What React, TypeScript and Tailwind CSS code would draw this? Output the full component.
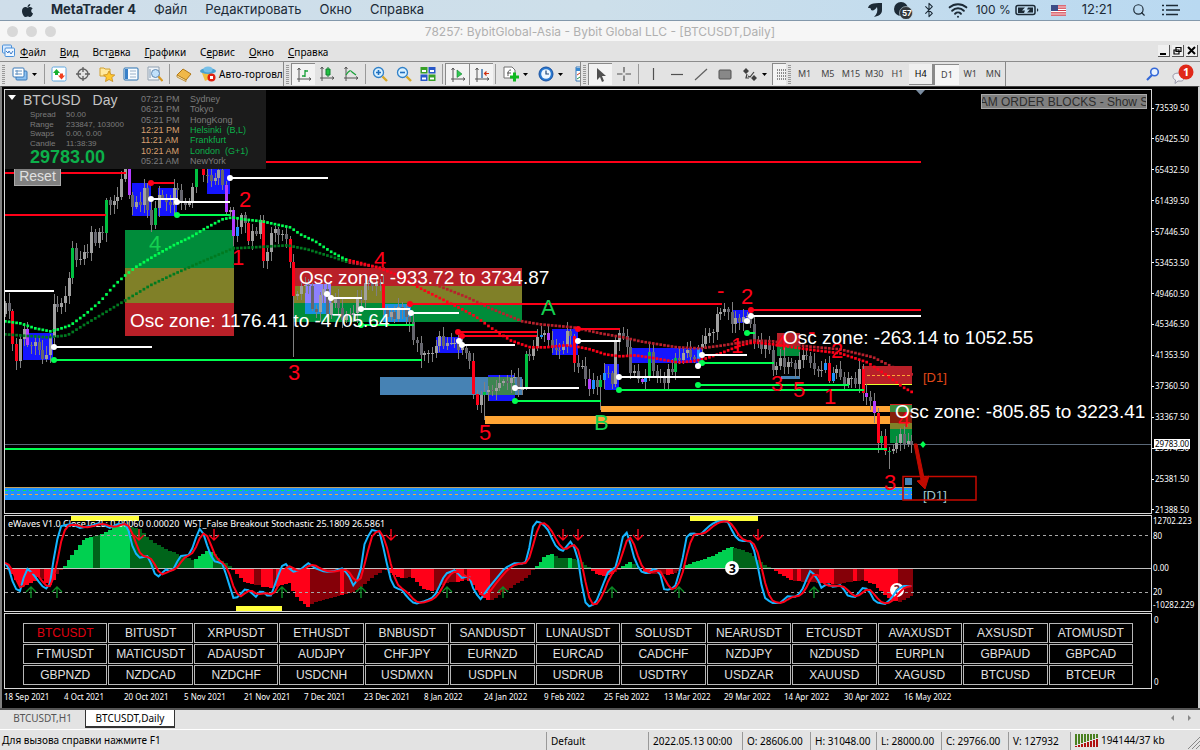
import type { ReactNode } from "react";
import { FaApple } from "react-icons/fa";
import { Bluetooth, Search, Wifi } from "lucide-react";
import clsx from "clsx";

const BAR = 3.745;
const FIRST = 5;

// daily closes in thousands, 18 Sep 2021 - 18 May 2022
const CLOSES = [
  48.3, 47.2, 42.9, 40.7, 43.6, 44.9, 42.8, 42.7, 43.2, 42.2, 41.0, 41.5, 43.8,
  48.1, 47.7, 48.2, 49.2, 51.5, 55.4, 53.8, 53.9, 54.9, 54.7, 57.5, 56.0, 57.4, 57.3, 61.6, 60.9, 61.5, 62.0, 64.3, 66.0, 62.2, 60.7, 61.3, 60.9, 63.1, 60.3, 58.4, 60.6, 62.2, 61.9, 61.3,
  61.0, 63.2, 62.9, 61.4, 61.0, 61.5, 63.3, 67.5, 66.9, 64.9, 64.8, 64.1, 64.4, 65.5, 63.6, 60.1, 60.3, 56.9, 58.1, 59.7, 58.6, 56.3, 57.6, 57.2, 59.0, 53.7, 54.8, 57.3, 57.8, 57.0,
  57.2, 56.5, 53.6, 49.2, 49.4, 50.5, 50.6, 50.5, 47.5, 47.1, 49.3, 50.1, 46.7, 48.3, 48.8, 47.6, 46.1, 46.8, 46.7, 46.9, 48.9, 48.6, 50.8, 50.8, 50.4, 50.8, 50.7, 47.5, 46.4, 47.1, 46.2,
  47.7, 47.3, 46.4, 45.8, 43.4, 43.1, 41.5, 41.7, 41.8, 41.8, 42.7, 43.9, 42.6, 43.1, 43.1, 43.1, 42.2, 42.4, 41.7, 40.7, 36.4, 35.0, 36.3, 36.7, 36.9, 36.8, 37.2, 37.8, 38.1, 37.9, 38.5,
  38.7, 36.9, 37.3, 41.6, 41.4, 42.4, 43.8, 44.1, 44.4, 43.5, 42.4, 42.2, 42.1, 42.6, 44.6, 43.9, 40.5, 40.0, 40.1, 38.4, 37.1, 38.3, 37.3, 38.3, 39.2, 39.1, 37.7, 43.2,
  44.4, 43.9, 42.5, 39.1, 39.4, 38.4, 38.0, 38.7, 41.9, 39.4, 38.7, 38.8, 37.8, 39.7, 39.3, 41.1, 40.9, 41.8, 42.2, 41.3, 41.0, 42.4, 42.9, 44.0, 44.3, 44.5, 46.8, 47.1, 47.4, 47.1, 45.5,
  46.3, 45.8, 46.4, 46.6, 45.5, 43.2, 43.5, 42.3, 42.8, 42.2, 39.5, 40.1, 41.1, 39.9, 40.6, 40.4, 39.7, 40.8, 41.5, 41.4, 40.5, 39.7, 39.4, 39.5, 40.4, 38.1, 39.2, 39.7, 38.6, 37.6,
  38.5, 38.5, 37.7, 39.7, 36.6, 36.0, 35.5, 34.0, 30.1, 31.0, 29.0, 29.0, 29.3, 30.1, 31.3, 29.9, 30.4, 29.8,
];

const RED = "#ff0018";
const GREEN = "#00c040";
const LABEL_GREEN = "#14d050";
const PURPLE = "#b43cff";
const BLUE = "#1e90ff";

const VOLUME_COLORS: Record<number, string> = {
  2: RED, 3: RED, 6: PURPLE, 18: GREEN, 27: GREEN, 33: PURPLE, 40: GREEN, 51: GREEN, 53: RED, 59: PURPLE, 61: PURPLE,
  62: BLUE, 65: RED, 69: RED, 76: RED, 77: RED, 101: RED, 125: RED, 126: RED, 128: GREEN, 139: GREEN, 143: BLUE,
  145: PURPLE, 152: RED, 156: PURPLE, 157: BLUE, 159: GREEN, 160: BLUE, 170: PURPLE, 171: BLUE, 172: GREEN,
  179: GREEN, 185: BLUE, 219: BLUE, 220: RED, 221: BLUE, 229: RED, 230: PURPLE, 232: PURPLE, 233: RED, 234: GREEN,
  235: RED, 236: GREEN,
};

const LONG_LOWS: Record<number, number> = { 3: 39.6, 4: 39.8, 40: 57.9, 77: 41.2, 111: 39.8, 128: 33.0, 159: 34.3, 236: 26.7 };

type Point = [number, number];

const FAST_MA: Point[] = [
  [5, 321], [20, 323], [35, 328], [50, 331], [58, 329], [70, 325], [85, 314], [100, 301], [115, 284], [125, 275], [135, 267], [155, 255],
  [175, 244], [190, 237], [205, 228], [222, 219], [232, 217], [243, 219], [262, 221], [280, 225], [290, 227], [300, 234], [315, 241],
  [330, 251], [345, 259], [362, 263], [380, 268], [400, 276], [418, 287], [440, 298], [460, 308], [475, 316], [490, 327], [510, 340], [530, 347],
  [545, 347], [565, 345], [575, 346], [590, 349], [605, 354], [620, 356], [635, 355], [655, 358], [677, 362], [692, 361], [706, 358],
  [723, 352], [740, 345], [753, 342], [773, 344], [807, 349], [840, 353], [867, 362], [885, 374], [903, 387], [914, 393],
];

const SLOW_MA: Point[] = [
  [5, 334], [47, 337], [67, 335], [83, 325], [100, 315], [125, 300], [150, 285], [173, 274], [200, 262], [233, 248], [253, 247], [287, 245],
  [307, 249], [333, 257], [348, 262], [373, 266], [383, 268], [407, 276], [437, 285], [467, 297], [490, 308], [522, 321], [540, 324], [573, 327],
  [600, 333], [623, 337], [640, 341], [677, 347], [700, 348], [723, 345], [753, 340], [773, 341], [807, 346], [840, 349], [873, 357],
  [893, 367], [914, 375],
];

// edge of the eWaves histogram, zero line at 568
const WAVES: Point[] = [
  [5, 568], [8, 569], [12, 573], [15, 578], [20, 585], [28, 585], [35, 581], [40, 576], [45, 583], [50, 585], [54, 580], [57, 575], [60, 571],
  [63, 568], [67, 563], [70, 558], [75, 551], [80, 545], [85, 538], [92, 537], [100, 535], [108, 531], [115, 526], [120, 524], [128, 526],
  [140, 529], [147, 537], [155, 543], [165, 549], [175, 553], [187, 558], [194, 560], [200, 556], [207, 551], [213, 552], [220, 560],
  [227, 564], [232, 568], [240, 577], [246, 583], [258, 585], [265, 587], [272, 588], [280, 586], [290, 583], [293, 590], [298, 598],
  [304, 604], [309, 607], [315, 602], [325, 600], [340, 596], [355, 592], [365, 584], [375, 576], [382, 571], [386, 569], [390, 573],
  [400, 578], [412, 577], [418, 583], [425, 590], [434, 591], [440, 586], [450, 582], [460, 582], [467, 579], [473, 585], [480, 594],
  [487, 600], [493, 600], [500, 594], [510, 588], [520, 582], [530, 574], [535, 568], [538, 565], [545, 556], [552, 554], [560, 558],
  [572, 558], [580, 561], [587, 566], [590, 568], [595, 573], [605, 576], [612, 574], [619, 570], [621, 567], [630, 562], [635, 565], [640, 568],
  [650, 575], [660, 573], [668, 575], [674, 574], [680, 570], [685, 566], [695, 562], [705, 559], [715, 555], [725, 549], [732, 547],
  [740, 549], [750, 553], [757, 559], [765, 565], [772, 568], [785, 577], [795, 581], [810, 582], [825, 583], [838, 584], [850, 582],
  [865, 580], [875, 585], [885, 595], [893, 601], [900, 602], [907, 598], [914, 594],
];

const FADING: Point[] = [
  [40, 43], [54, 63], [93, 100], [130, 194], [213, 232], [254, 261], [273, 276], [310, 340], [344, 386], [404, 412], [434, 456], [464, 468],
  [490, 536], [554, 569], [573, 590], [612, 620], [633, 640], [650, 667], [674, 681], [734, 773], [794, 798], [802, 820], [835, 854],
  [858, 865], [899, 915],
];

const STOCHASTIC: Point[] = [
  [5, 563], [10, 570], [14, 588], [20, 591], [25, 573], [28, 568], [33, 574], [42, 586], [47, 589], [51, 582], [55, 548], [61, 526], [72, 524],
  [80, 528], [90, 526], [100, 523], [110, 528], [118, 524], [127, 524], [132, 545], [138, 558], [148, 556], [152, 566], [156, 577], [160, 576],
  [165, 569], [172, 572], [180, 556], [190, 555], [195, 540], [201, 526], [207, 545], [213, 561], [222, 563], [228, 580], [233, 598],
  [238, 597], [246, 588], [256, 597], [261, 590], [270, 598], [276, 582], [281, 567], [285, 563], [292, 572], [300, 570], [308, 563],
  [315, 568], [325, 572], [335, 571], [343, 568], [350, 578], [354, 587], [360, 574], [365, 541], [372, 530], [380, 532], [385, 555],
  [390, 578], [395, 588], [402, 590], [408, 598], [415, 604], [425, 601], [434, 597], [440, 585], [445, 574], [455, 570], [462, 578],
  [469, 576], [473, 588], [480, 600], [487, 590], [495, 580], [505, 568], [515, 563], [525, 564], [530, 545], [534, 521], [542, 523],
  [548, 530], [555, 545], [562, 552], [571, 541], [577, 553], [581, 580], [586, 605], [591, 607], [597, 600], [604, 582], [609, 570],
  [615, 569], [620, 550], [624, 532], [628, 533], [633, 555], [640, 571], [648, 574], [654, 568], [660, 573], [663, 589], [670, 590],
  [676, 585], [682, 562], [687, 535], [692, 533], [700, 535], [708, 527], [715, 522], [722, 521], [728, 522], [734, 535], [740, 541],
  [750, 541], [756, 555], [760, 580], [765, 598], [772, 603], [780, 603], [788, 596], [797, 597], [803, 588], [810, 571], [816, 576],
  [822, 589], [827, 583], [833, 587], [841, 585], [848, 596], [856, 597], [862, 588], [868, 589], [875, 602], [885, 604], [890, 600],
  [897, 590], [903, 586], [912, 586],
];

// [x1, x2, y, color, dot at the start]
const LEVELS: [number, number, number, string, boolean][] = [
  [266, 921, 162, RED, false],
  [5, 126, 173, RED, false],
  [5, 106, 215, RED, false],
  [151, 174, 183, RED, true],
  [230, 328, 178, "#fff", true],
  [151, 178, 199, "#fff", true],
  [177, 230, 202, "#fff", true],
  [177, 230, 215, "#00ff50", true],
  [5, 54, 291, "#fff", false],
  [54, 152, 347, "#fff", true],
  [54, 422, 360, "#00ff50", true],
  [331, 362, 298, "#fff", true],
  [361, 410, 309, "#fff", true],
  [411, 459, 313, "#fff", true],
  [361, 414, 325, "#00ff50", true],
  [410, 722, 304, RED, true],
  [458, 537, 332, RED, true],
  [462, 537, 336, RED, true],
  [462, 515, 345, "#fff", true],
  [578, 620, 329, RED, true],
  [578, 620, 341, "#fff", true],
  [515, 579, 388, "#fff", true],
  [515, 601, 401, "#00ff50", true],
  [619, 700, 377, "#fff", true],
  [619, 864, 390, "#00ff50", true],
  [698, 849, 385, "#00ff50", true],
  [702, 747, 355, "#fff", true],
  [702, 774, 363, "#00ff50", true],
  [751, 921, 316, "#fff", true],
  [751, 921, 310, RED, true],
  [747, 755, 333, "#00ff50", true],
  [5, 887, 449, "#00ff50", false],
];

// [x, y, width, height, color]
const BLOCKS: [number, number, number, number, string][] = [
  [125, 230, 109, 38, "#008c3a"],
  [125, 268, 109, 35, "#808028"],
  [125, 303, 109, 33, "#b92028"],
  [294, 268, 228, 18, "#b92028"],
  [294, 286, 228, 17, "#808028"],
  [294, 303, 228, 19, "#008c3a"],
  [777, 333, 23, 13, "#b92028"],
  [777, 346, 23, 10, "#008c3a"],
  [23, 333, 30, 27, "#1515ff"],
  [132, 183, 19, 33, "#1515ff"],
  [158, 188, 19, 28, "#1515ff"],
  [207, 160, 23, 34, "#1515ff"],
  [305, 284, 26, 19, "#8d80ff"],
  [305, 303, 26, 11, "#1890e0"],
  [383, 304, 28, 18, "#1890e0"],
  [436, 337, 26, 16, "#1515ff"],
  [552, 329, 26, 26, "#1515ff"],
  [605, 364, 14, 26, "#1515ff"],
  [632, 348, 70, 15, "#1515ff"],
  [732, 310, 19, 13, "#1515ff"],
  [380, 377, 142, 18, "#4682b4"],
  [488, 375, 27, 26, "#1515ff"],
  [488, 377, 27, 18, "#3d8450"],
  [781, 376, 19, 3, "#4682b4"],
  [601, 406, 289, 6, "#ffa535"],
  [485, 416, 405, 8, "#ffa535"],
  [890, 404, 22, 8, "#3d8a3a"],
  [890, 412, 22, 11, "#85200a"],
  [890, 423, 22, 6, "#808028"],
  [890, 429, 22, 14, "#008c3a"],
  [862, 366, 50, 18, "#b92028"],
  [5, 487, 907, 1, "#c0a060"],
  [5, 488, 907, 12, "#1e90ff"],
  [905, 478, 7, 7, "#4682b4"],
];

const WAVE_LABELS: [number, number, string, string][] = [
  [239, 207, "2", RED], [232, 265, "1", RED], [149, 251, "4", LABEL_GREEN], [288, 380, "3", RED], [374, 267, "4", RED], [479, 440, "5", RED],
  [541, 315, "A", LABEL_GREEN], [594, 430, "B", LABEL_GREEN], [717, 298, "-", RED], [741, 304, "2", RED], [731, 353, "1", RED], [775, 350, "4", RED],
  [808, 339, "-", RED], [831, 358, "2", RED], [771, 391, "3", RED], [793, 397, "5", RED], [824, 404, "1", RED], [898, 427, "4", RED], [884, 490, "3", RED],
];

const PRICES = ["73539.50", "69425.50", "65432.50", "61439.50", "57446.50", "53453.50", "49460.50", "45346.50", "41353.50", "37360.50", "33367.50", "29374.50", "25381.50", "21388.50"];

const DATES = [
  "18 Sep 2021", "4 Oct 2021", "20 Oct 2021", "5 Nov 2021", "21 Nov 2021", "7 Dec 2021", "23 Dec 2021", "8 Jan 2022",
  "24 Jan 2022", "9 Feb 2022", "25 Feb 2022", "13 Mar 2022", "29 Mar 2022", "14 Apr 2022", "30 Apr 2022", "16 May 2022",
];

const SYMBOLS = [
  "BTCUSDT", "BITUSDT", "XRPUSDT", "ETHUSDT", "BNBUSDT", "SANDUSDT", "LUNAUSDT", "SOLUSDT", "NEARUSDT", "ETCUSDT", "AVAXUSDT", "AXSUSDT", "ATOMUSDT",
  "FTMUSDT", "MATICUSDT", "ADAUSDT", "AUDJPY", "CHFJPY", "EURNZD", "EURCAD", "CADCHF", "NZDJPY", "NZDUSD", "EURPLN", "GBPAUD", "GBPCAD",
  "GBPNZD", "NZDCAD", "NZDCHF", "USDCNH", "USDMXN", "USDPLN", "USDRUB", "USDTRY", "USDZAR", "XAUUSD", "XAGUSD", "BTCUSD", "BTCEUR",
];

const CITIES: [string, string, boolean][] = [
  ["07:21 PM", "Sydney", false],
  ["06:21 PM", "Tokyo", false],
  ["05:21 PM", "HongKong", false],
  ["12:21 PM", "Helsinki  (B,L)", true],
  ["11:21 AM", "Frankfurt", true],
  ["10:21 AM", "London  (G+1)", true],
  ["05:21 AM", "NewYork", false],
];

const priceY = (p: number) => 108 + (73.54 - p) / 0.12973;

function valueAt(points: Point[], x: number) {
  const i = points.findIndex((p) => p[0] >= x);
  if (i < 0) return points[points.length - 1][1];
  if (i === 0) return points[0][1];
  const [x0, y0] = points[i - 1];
  const [x1, y1] = points[i];
  return y0 + ((y1 - y0) * (x - x0)) / (x1 - x0);
}

function noise(i: number) {
  const s = Math.sin(i * 12.9898) * 43758.5453;
  return s - Math.floor(s);
}

function Candles() {
  return (
    <g shapeRendering="crispEdges">
      {CLOSES.map((close, i) => {
        const open = i ? CLOSES[i - 1] : 46.8;
        const x = Math.round(FIRST + i * BAR);
        const top = priceY(Math.max(open, close));
        const bottom = priceY(Math.min(open, close));
        const high = top - 2 - noise(i) * 8;
        const low = LONG_LOWS[i] ? priceY(LONG_LOWS[i]) : bottom + 2 + noise(i + 400) * 8;
        const fill = VOLUME_COLORS[i] ?? (close >= open ? "#a0a0a0" : "#66666e");
        return (
          <g key={i}>
            <rect x={x} y={high} width={1} height={low - high} fill="#808080" />
            <rect x={x - 1} y={top} width={3} height={Math.max(1, bottom - top)} fill={fill} />
          </g>
        );
      })}
    </g>
  );
}

function Dots({ points, rising, falling }: { points: Point[]; rising: string; falling: string }) {
  return (
    <g>
      {CLOSES.map((_, i) => {
        const x = FIRST + i * BAR;
        return <rect key={i} x={x - 1} y={valueAt(points, x) - 1} width={2.7} height={2.7} fill={x < 346 ? rising : falling} />;
      })}
    </g>
  );
}

function PriceChart() {
  return (
    <svg className="block h-full w-full" viewBox="5 90 1146 423" preserveAspectRatio="xMinYMin slice" fontFamily="Liberation Sans, Arial, sans-serif">
      <g shapeRendering="crispEdges">
        {BLOCKS.map(([x, y, w, h, fill], i) => (
          <rect key={i} x={x} y={y} width={w} height={h} fill={fill} />
        ))}
        <path d="M5 490.5H912" stroke="#00f050" strokeDasharray="3 3" />
        <path d="M5 494.5H912" stroke="#f0a840" strokeDasharray="3 3" />
        <path d="M862 375.5H912" stroke="#ffa535" strokeDasharray="3 2" />
        <path d="M862 384.5H912" stroke="#e8ff30" />
        <path d="M890 404.5H912" stroke="#d02020" />
        <path d="M5 444.5H1151" stroke="#5a6878" />
      </g>
      <Candles />
      <Dots points={SLOW_MA} rising="#007a20" falling="#b8202c" />
      <Dots points={FAST_MA} rising="#00ff50" falling={RED} />
      {LEVELS.map(([x1, x2, y, color, dot], i) => (
        <g key={i}>
          <rect x={x1} y={y - 1} width={x2 - x1} height={2} fill={color} />
          {dot && <circle cx={x1} cy={y} r={3} fill={color} />}
        </g>
      ))}
      {[[327, 294], [459, 341], [698, 366], [747, 321]].map(([x, y]) => (
        <circle key={x} cx={x} cy={y} r={3} fill="#fff" />
      ))}
      <path d="M923 441l3 3.500-3 3.500-3-3.500z" fill="#00ff50" />
      <path d="M916 90h9l-4.500 5z" fill="#7a8ca0" />
      {WAVE_LABELS.map(([x, y, label, fill], i) => (
        <text key={i} x={x} y={y} fill={fill} fontSize={22}>{label}</text>
      ))}
      <g fill="#fff" fontSize={19}>
        <text x={130} y={327}>Osc zone: 1176.41 to -4705.64</text>
        <text x={299} y={284}>Osc zone: -933.72 to 3734.87</text>
        <text x={783} y={344}>Osc zone: -263.14 to 1052.55</text>
        <text x={895} y={418}>Osc zone: -805.85 to 3223.41</text>
      </g>
      <text x={923} y={382} fill="#e04818" fontSize={13}>[D1]</text>
      <text x={923} y={500} fill="#a0ccd0" fontSize={13}>[D1]</text>
      <rect x={903} y={476.5} width={73} height={23.5} fill="none" stroke="#c80a00" strokeWidth={1.5} />
      <path d="M914 444h3l7 34 5-2-4 13-8-8 4-1z" fill="#c00a00" stroke="#c00a00" />
    </svg>
  );
}

function Oscillator() {
  const line = CLOSES.map((_, i) => valueAt(STOCHASTIC, FIRST + i * BAR));
  const signal = line.map((_, i) => (line[Math.max(0, i - 2)] + line[Math.max(0, i - 1)] + line[i]) / 3);
  const toPath = (ys: number[]) => ys.map((y, i) => `${(FIRST + i * BAR).toFixed(1)},${y.toFixed(1)}`).join(" ");

  return (
    <svg className="block h-full w-full" viewBox="5 516 1146 95" preserveAspectRatio="xMinYMin slice" fontFamily="Noto Sans, sans-serif">
      <g shapeRendering="crispEdges">
        {CLOSES.map((_, i) => {
          const x = FIRST + i * BAR;
          const y = valueAt(WAVES, x);
          const fading = FADING.some(([a, b]) => x >= a && x < b);
          const fill = y < 568 ? (fading ? "#00641a" : "#00d050") : fading ? "#850008" : RED;
          return <rect key={i} x={x - 2} y={Math.min(y, 568)} width={4} height={Math.abs(y - 568)} fill={fill} />;
        })}
        <path d="M5 535.5H1151M5 592.5H1151" stroke="#a8a8a8" strokeDasharray="3 3" />
        <path d="M5 568.5H1151" stroke="#c0c0c0" />
        <path d="M71 516h68v5h-68zM236 606h46v5h-46zM690 516h68v5h-68z" fill="#ffff3c" />
      </g>
      <text x={8} y={527} fill="#fff" fontSize={9}>eWaves V1.0 CloseToZL: 0.00060 0.00020&nbsp; W5T_False Breakout Stochastic 25.1809 26.5861</text>
      <circle cx={732} cy={568} r={7} fill="#fff" />
      <circle cx={897} cy={590} r={7} fill="#fff" />
      <text x={729} y={573} fill="#000" fontSize={12} fontWeight="bold">3</text>
      <text x={894} y={594} fill="#802030" fontSize={12} fontWeight="bold">?</text>
      <polyline points={toPath(line)} fill="none" stroke="#14b4ff" strokeWidth={2} />
      <polyline points={toPath(signal)} fill="none" stroke={RED} strokeWidth={2} />
      {[139, 214, 391, 563, 578, 638, 758].map((x) => (
        <path key={x} d={`M${x} 529v11m-5-5l5 5l5-5`} fill="none" stroke={RED} strokeWidth={1.4} />
      ))}
      {[31, 57, 282, 361, 447, 503, 612, 679, 814].map((x) => (
        <path key={x} d={`M${x} 598v-11m-5 5l5-5l5 5`} fill="none" stroke="#0a8a24" strokeWidth={1.4} />
      ))}
    </svg>
  );
}

function MarketInfo() {
  return (
    <div className="absolute top-0 left-0 flex h-[79px] w-[261px] bg-[#1b1b1b] font-['Liberation_Sans',Arial,sans-serif] text-[9px] leading-[10px] text-[#7c7c7c]">
      <svg className="mt-1 ml-[3px] h-2 w-2" viewBox="0 0 8 8">
        <path d="M0 1h8L4 6z" fill="#fff" />
      </svg>
      <div className="ml-[7px] w-[118px]">
        <div className="flex h-5 items-center gap-3 text-[14px] text-[#c4c4c4]">
          <span>BTCUSD</span>
          <span>Day</span>
        </div>
        <dl className="ml-[7px] grid h-[38px] grid-cols-[36px_1fr] content-between whitespace-nowrap text-[8px] leading-[9px]">
          <dt>Spread</dt>
          <dd>50.00</dd>
          <dt>Range</dt>
          <dd>233847, 103000</dd>
          <dt>Swaps</dt>
          <dd>0.00, 0.00</dd>
          <dt>Candle</dt>
          <dd>11:38:39</dd>
        </dl>
        <p className="ml-[7px] text-[18px] leading-[18px] font-bold text-[#0cb04a]">29783.00</p>
      </div>
      <ul className="mt-1 flex h-[72px] flex-col justify-between">
        {CITIES.map(([time, city, open]) => (
          <li key={city} className="flex whitespace-pre">
            <span className={clsx("w-[49px]", open && "text-[#d8a070]")}>{time}</span>
            <span className={clsx(open && "text-[#0cb04a]")}>{city}</span>
          </li>
        ))}
      </ul>
    </div>
  );
}

function MacMenuBar() {
  return (
    <header className="flex h-[21px] items-center border-b border-[#8398ab] bg-linear-to-r from-[#cfdeea] via-[#cddfea] to-[#b9d9f1] px-5 font-[Inter,sans-serif] text-[13px] text-[#1c2a36]">
      <FaApple className="mr-4 text-[15px]" />
      <nav className="flex gap-[18px]">
        <button className="font-bold">MetaTrader 4</button>
        <button>Файл</button>
        <button>Редактировать</button>
        <button>Окно</button>
        <button>Справка</button>
      </nav>
      <div className="ml-auto flex items-center">
        <svg className="mr-[10px] h-4 w-4" viewBox="0 0 16 16" fill="currentColor">
          <path d="M1 6C2 2 5 1 15 1v7c0 4-3 6-8 7 3-3 4-6 3-10-2 3-4 4-6 3 0-2-1-2-3-2z" />
        </svg>
        <svg className="mr-2 h-[18px] w-5" viewBox="0 0 20 18">
          <circle cx="8" cy="8" r="7" fill="#1c2a36" />
          <circle cx="13" cy="12" r="6.500" fill="#32363a" stroke="#cddfea" strokeWidth=".6" />
          <text x="9" y="15" fill="#fff" fontSize="8" fontWeight="bold">57</text>
        </svg>
        <Bluetooth className="mr-[11px] h-4 w-4" strokeWidth={1.6} />
        <Wifi className="mr-2 h-5 w-5" strokeWidth={2.4} />
        <span className="mr-1 text-[12px]">100 %</span>
        <svg className="mr-3 h-3 w-6" viewBox="0 0 24 12">
          <rect x="1" y="1.500" width="19" height="9" rx="2" fill="none" stroke="#1c2a36" strokeWidth="1.500" />
          <path d="M3 3.500h7l-3 3h3l-1 2.500H3zM18 3.500v5h-6l3-3h-3l1-2z" fill="#1c2a36" />
          <path d="M22 4v4l1.500-2z" fill="#1c2a36" />
        </svg>
        <svg className="mr-4 h-[11px] w-[15px]" viewBox="0 0 15 11">
          <path d="M0 0h15v11H0z" fill="#fff" />
          <path d="M0 .8h15M0 3.200h15M0 5.500h15M0 7.800h15M0 10.200h15" stroke="#d03a48" strokeWidth="1.200" />
          <path d="M0 0h7v6H0z" fill="#3c4c88" />
        </svg>
        <span className="mr-5 text-[13px]">12:21</span>
        <Search className="mr-4 h-[14px] w-[14px]" />
        <svg className="h-3 w-[18px]" viewBox="0 0 18 12">
          <path d="M0 1.500h2M0 6h2M0 10.500h2M4 1.500h12M4 6h14M4 10.500h12" stroke="#1c2a36" strokeWidth="1.600" />
        </svg>
      </div>
    </header>
  );
}

const MENU = [
  ["Ф", "айл", ""],
  ["В", "ид", ""],
  ["а", "вка", "Вст"],
  ["Г", "рафики", ""],
  ["е", "рвис", "С"],
  ["О", "кно", ""],
  ["С", "правка", ""],
];

function MenuBar() {
  return (
    <div className="flex h-5 items-center bg-[#e3e3e3] pl-[2px]">
      <svg className="mr-[5px] h-[14px] w-[13px]" viewBox="0 0 13 14">
        <rect x=".5" y="1" width="9" height="8" rx="1" fill="#d8eaff" stroke="#4a90d9" />
        <rect x="3" y="4" width="9.500" height="8.500" rx="1" fill="#eef6ff" stroke="#4a90d9" />
        <path d="M4 7l2 2 1-2 2 3 2-3" fill="none" stroke="#3a7ac9" />
      </svg>
      <nav className="flex gap-[14px] pt-[2px] text-[10px]">
        {MENU.map(([key, rest, before]) => (
          <button key={key + rest}>
            {before}
            <u>{key}</u>
            {rest}
          </button>
        ))}
      </nav>
      <div className="ml-auto flex gap-[2px] pr-[2px]">
        {["M2 9h6", "M4 2.500h5v4H4zM2 5h5v4H2z", "M2 2l7 7M9 2l-7 7"].map((d, i) => (
          <button key={d} aria-label={["Minimize", "Restore", "Close"][i]} className="h-3 w-3 border-r border-b border-[#555] bg-[#f0f0f0]">
            <svg className="h-[11px] w-[11px]" viewBox="0 0 11 11">
              <path d={d} fill="none" stroke="#000" strokeWidth={i === 1 ? 1.2 : 2} />
            </svg>
          </button>
        ))}
      </div>
    </div>
  );
}

function Grip() {
  return <span className="mx-[2px] h-[19px] w-[3px] shrink-0 bg-[repeating-linear-gradient(#999_0_1px,#e3e3e3_1px_2px)]" />;
}

function Divider() {
  return <span className="mx-[2px] h-5 w-px shrink-0 bg-[#999]" />;
}

function Tool({ label, pressed, menu, children }: { label: string; pressed?: boolean; menu?: boolean; children: ReactNode }) {
  return (
    <button
      aria-label={label}
      className={clsx(
        "flex h-[22px] shrink-0 items-center justify-center gap-1",
        menu ? "w-[35px]" : "w-6",
        pressed && "border-t border-l border-[#8a8a8a] bg-[#f3f3f3]",
      )}
    >
      <svg className="h-4 w-4" viewBox="0 0 16 16" fill="none">
        {children}
      </svg>
      {menu && (
        <svg className="h-[3px] w-[5px]" viewBox="0 0 5 3">
          <path d="M0 0h5L2.500 3z" fill="#000" />
        </svg>
      )}
    </button>
  );
}

const AXES = <path d="M3 1v14M1 12h14M1.500 3l1.500-2 1.500 2M13 10.500l2 1.500-2 1.500" stroke="#555" />;

function Toolbar() {
  return (
    <div className="flex h-[25px] border-t border-[#8c8c8c] bg-[#e3e3e3]">
      <div className="flex w-[283px] shrink-0 items-center overflow-hidden">
        <Grip />
        <Tool label="Профили" menu>
          <rect x="4" y="5" width="11" height="9" rx="1" fill="#8cc0f0" stroke="#3878b8" />
          <rect x="1" y="2" width="11" height="9" rx="1" fill="#fff" stroke="#3878b8" />
          <path d="M3 5h7M3 8h7M5 4v5" stroke="#6090c0" />
        </Tool>
        <Divider />
        <Tool label="Обзор рынка">
          <rect x="1" y="1" width="14" height="14" rx="1.500" fill="#fff" stroke="#60a8e0" />
          <path d="M5.500 3l3.500 4H7v2H4V7H2z" fill="#18b030" />
          <path d="M10.500 13.500l3.500-4h-2v-2H9v2H7z" fill="#f04020" />
        </Tool>
        <Tool label="Окно данных">
          <circle cx="8" cy="8" r="5" stroke="#606060" strokeWidth="1.300" />
          <path d="M8 1v5M8 10v5M1 8h5M10 8h5" stroke="#606060" strokeWidth="1.300" />
        </Tool>
        <Tool label="Навигатор">
          <path d="M1 2h4l1 1h5v7H1z" fill="#ffe9a0" stroke="#d0a030" />
          <path d="M10 5l1.800 3.500 4 .5-3 2.500 1 4-3.800-2-3.500 2 .8-4-2.800-2.500 3.800-.5z" fill="#ffc830" stroke="#c88a18" strokeWidth=".8" />
        </Tool>
        <Tool label="Терминал">
          <rect x="1" y="2" width="14" height="12" rx="1" fill="#f8fcff" stroke="#2870b0" />
          <path d="M2 3h3v10H2z" fill="#3880c8" />
          <path d="M7 5h6M7 8h6M7 11h6" stroke="#98b0c8" />
        </Tool>
        <Tool label="Тестер стратегий">
          <path d="M1 1h11v13H1z" fill="#f0f4f8" stroke="#90a0b0" />
          <path d="M3 3v9" stroke="#8098b0" />
          <circle cx="8.500" cy="7.500" r="4" fill="#c0e0fa" stroke="#6088b0" />
          <path d="M11.500 10.500l4 4.500" stroke="#d89820" strokeWidth="2" />
        </Tool>
        <Divider />
        <Tool label="MetaEditor">
          <path d="M1 9l6-6 8 5-5 6z" fill="#f0b848" stroke="#b07818" />
          <path d="M1 9l9 5v1.500L1 11z" fill="#fff0c0" stroke="#b07818" strokeWidth=".8" />
        </Tool>
        <button className="flex shrink-0 items-center gap-[3px] pl-1 text-[10px]">
          <svg className="h-4 w-4 shrink-0" viewBox="0 0 16 16">
            <path d="M2 7l3 8 5-2 3-5z" fill="#f0c040" />
            <ellipse cx="8" cy="5" rx="8" ry="3" fill="#48a0d0" />
            <ellipse cx="8" cy="3.500" rx="4.500" ry="3" fill="#78c0e8" />
            <circle cx="11.500" cy="11.500" r="4" fill="#e02010" />
            <path d="M10 10h3v3h-3z" fill="#fff" />
          </svg>
          Авто-торговля
        </button>
      </div>

      <div className="flex w-[297px] shrink-0 items-center overflow-hidden border-l border-[#888]">
        <Grip />
        <Tool label="Бары" pressed>
          {AXES}
          <path d="M9 3v7M9 4h3M6 9h3" stroke="#18a038" strokeWidth="1.300" />
        </Tool>
        <Tool label="Свечи">
          {AXES}
          <path d="M9 1v10" stroke="#108030" />
          <path d="M7 3h4v6H7z" fill="#20c040" stroke="#108030" />
        </Tool>
        <Tool label="Линия">
          {AXES}
          <path d="M3 9c3-5 5-5 6-3l4 3" stroke="#18a038" strokeWidth="1.200" />
        </Tool>
        <Divider />
        <Tool label="Увеличить">
          <circle cx="6.500" cy="6.500" r="5" fill="#d8f0ff" stroke="#3080c8" strokeWidth="1.300" />
          <path d="M4 6.500h5M6.500 4v5" stroke="#2070c0" strokeWidth="1.600" />
          <path d="M10.500 10.500l4.500 4.500" stroke="#d8a828" strokeWidth="2.400" />
        </Tool>
        <Tool label="Уменьшить">
          <circle cx="6.500" cy="6.500" r="5" fill="#d8f0ff" stroke="#3080c8" strokeWidth="1.300" />
          <path d="M4 6.500h5" stroke="#2070c0" strokeWidth="1.600" />
          <path d="M10.500 10.500l4.500 4.500" stroke="#d8a828" strokeWidth="2.400" />
        </Tool>
        <Tool label="Окна мозаикой">
          <path d="M.5 1h7v6.500h-7zM8.500 8.500h7V15h-7z" fill="#38a028" />
          <path d="M8.500 1h7v6.500h-7zM.5 8.500h7V15h-7z" fill="#2858c8" />
          <path d="M2 4h4v2H2zM10 4h4v2h-4zM2 11.500h4v2H2zM10 11.500h4v2h-4z" fill="#fff" />
        </Tool>
        <Divider />
        <Tool label="Автопрокрутка" pressed>
          {AXES}
          <path d="M7 3l5 4-5 3.500z" fill="#30c850" stroke="#108030" strokeWidth=".6" />
        </Tool>
        <Tool label="Сдвиг графика" pressed>
          {AXES}
          <path d="M8 2v9" stroke="#2060a0" strokeWidth="1.300" />
          <path d="M15 6.500h-4M12.500 4.500l-2 2 2 2" stroke="#d03010" strokeWidth="1.200" />
        </Tool>
        <Divider />
        <Tool label="Индикаторы" menu>
          <path d="M1 1h8l3 3v8H1z" fill="#fff" stroke="#707070" />
          <path d="M5 10c0-4 0-6 3-6M4 7h4" stroke="#555" />
          <path d="M7 11h9M11.500 6.500v9" stroke="#10b820" strokeWidth="3" />
        </Tool>
        <Tool label="Периоды" menu>
          <circle cx="8" cy="8" r="7" fill="#2878d0" stroke="#1850a0" />
          <circle cx="8" cy="8" r="4.800" fill="#f0f8ff" />
          <path d="M8 4.500V8h3" stroke="#204878" strokeWidth="1.200" />
        </Tool>
        <Tool label="Шаблоны">
          <path d="M4 1h12v14H4z" fill="#fff" stroke="#3878b8" />
          <path d="M4 2h12v3H4z" fill="#3888d0" />
          <path d="M5 9l3-2 3 2" stroke="#d04020" />
          <path d="M5 13l3-2 3 2" stroke="#209040" />
        </Tool>
      </div>

      <div className="flex w-[206px] shrink-0 items-center overflow-hidden border-l border-[#888]">
        <Grip />
        <Tool label="Курсор" pressed>
          <path d="M4 1v12l3-3 2 5 2-1-2-5h4z" fill="#505050" />
        </Tool>
        <Tool label="Перекрестие">
          <path d="M8 1v5.500M8 9.500V15M1 8h5.500M9.500 8H15" stroke="#505050" strokeWidth="1.200" />
        </Tool>
        <Divider />
        <Tool label="Вертикальная линия">
          <path d="M8.500 2v12" stroke="#505050" strokeWidth="1.200" />
        </Tool>
        <Tool label="Горизонтальная линия">
          <path d="M2 8.500h12" stroke="#505050" strokeWidth="1.200" />
        </Tool>
        <Tool label="Трендовая линия">
          <path d="M2 14L14 3" stroke="#606060" strokeWidth="1.200" />
        </Tool>
        <Tool label="Прямоугольник">
          <rect x="2" y="4" width="12" height="9" rx="1" fill="#888" stroke="#505050" />
        </Tool>
        <Tool label="Стрелки" menu>
          <path d="M4 2l3 3-3 3-3-3zM12 9l3 3-3 3-3-3z" fill="#404040" />
          <path d="M6 10l2 1 4-5M5 8l-1 4h3" stroke="#404040" strokeWidth="1.200" />
        </Tool>
        <Tool label="Фибоначчи" pressed>
          <path d="M0 3h16M0 6h16M0 9h16M0 12h16" stroke="#222" strokeDasharray="1 1" />
        </Tool>
      </div>

      <div className="flex w-[220px] shrink-0 items-center border-r border-[#888] text-[9px] text-[#444]">
        <Grip />
        {["M1", "M5", "M15", "M30", "H1", "H4", "D1", "W1", "MN"].map((tf) => (
          <button
            key={tf}
            className={clsx(
              "h-[21px] flex-1 text-center",
              tf === "H4" && "border-r-2 border-b border-[#8a8a8a] bg-[#efefef] text-black",
              tf === "D1" && "border-t border-l border-[#8a8a8a] bg-[#f6f6f6]",
            )}
          >
            {tf}
          </button>
        ))}
      </div>

      <div className="ml-auto flex items-center gap-3 pr-[6px]">
        <button aria-label="Поиск">
          <svg className="h-[14px] w-[14px]" viewBox="0 0 14 14" fill="none">
            <circle cx="8.500" cy="5" r="3.800" fill="#e8f2ff" stroke="#3468d8" strokeWidth="1.600" />
            <path d="M6 8l-5 5" stroke="#3468d8" strokeWidth="2.200" />
          </svg>
        </button>
        <button aria-label="Уведомления">
          <svg className="h-5 w-[22px]" viewBox="0 0 22 20">
            <path d="M1 12c0-4 11-4 11 1s-3 4-6 4l-3 2.500.5-3.500C1.500 15 1 14 1 12z" fill="#f0f0f4" stroke="#9898a8" />
            <circle cx="14" cy="8" r="7.500" fill="#e02818" />
            <text x="11" y="12" fill="#fff" fontSize="11" fontWeight="bold" fontFamily="Noto Sans, sans-serif">1</text>
          </svg>
        </button>
      </div>
    </div>
  );
}

function Terminal() {
  return (
    <main className="border-t border-r-2 border-l-2 border-t-[#444] border-r-[#d0d0d0] border-l-[#808080] bg-black pt-[2px] pl-[2px] text-[8px] leading-[10px] text-white">
      <section className="mb-px flex h-[425px]">
        <div className="relative min-w-0 flex-1 overflow-hidden border border-[#d8d8d8]">
          <PriceChart />
          <button className="absolute top-[77px] left-[9px] h-[19px] w-[47px] border border-[#aaa] bg-[#808080] text-center font-['Liberation_Sans',Arial,sans-serif] text-[14px] leading-[17px] text-[#e0e0e0]">
            Reset
          </button>
          <MarketInfo />
          <button className="absolute top-1 right-1 flex h-[15px] w-[166px] items-center justify-center overflow-hidden border border-[#aaa] bg-[#808080] font-['Liberation_Sans',Arial,sans-serif] text-[12px] whitespace-nowrap text-[#2c2c2c]">
            AM ORDER BLOCKS - Show S
          </button>
        </div>
        <div className="relative w-[46px] shrink-0">
          <ul className="mt-[14px] flex h-[412px] flex-col justify-between">
            {PRICES.map((p) => (
              <li key={p} className="flex items-center gap-px">
                <span className="h-px w-[2px] bg-white" />
                {p}
              </li>
            ))}
          </ul>
          <span className="absolute top-[350px] left-[2px] bg-white px-px text-black">29783.00</span>
        </div>
      </section>

      <section className="mb-px flex h-[97px]">
        <div className="min-w-0 flex-1 border border-[#d8d8d8]">
          <Oscillator />
        </div>
        <ul className="w-[46px] shrink-0 pt-px pl-px">
          <li className="h-[15px]">12702.223</li>
          <li className="h-8">80</li>
          <li className="h-6">0.00</li>
          <li className="h-[13px]">20</li>
          <li>-10282.229</li>
        </ul>
      </section>

      <section className="flex h-[76px]">
        <div className="min-w-0 flex-1 border border-[#d8d8d8] px-[18px] pt-[9px]">
          <div className="grid grid-cols-13 gap-px">
            {SYMBOLS.map((s, i) => (
              <button
                key={s}
                className={clsx(
                  "h-5 border border-[#b8b8b8] text-center font-['Liberation_Sans',Arial,sans-serif] text-[12px] leading-[18px]",
                  i === 0 ? "text-[#e00010]" : "text-[#e0e0e0]",
                )}
              >
                {s}
              </button>
            ))}
          </div>
        </div>
        <div className="flex w-[46px] shrink-0 flex-col justify-between py-[2px] pl-[2px]">
          <span>0</span>
          <span>0</span>
        </div>
      </section>

      <ul className="flex h-[19px] pt-[3px]">
        {DATES.map((d) => (
          <li key={d} className="w-[60px] shrink-0 whitespace-nowrap">{d}</li>
        ))}
      </ul>
    </main>
  );
}

const STATUS = [
  ["w-[102px]", "Default"],
  ["w-[94px]", "2022.05.13 00:00"],
  ["w-[68px]", "O: 28606.00"],
  ["w-[66px]", "H: 31048.00"],
  ["w-[65px]", "L: 28000.00"],
  ["w-[67px]", "C: 29766.00"],
  ["w-[62px]", "V: 127932"],
];

export default function App() {
  return (
    <div className="min-h-screen overflow-hidden bg-[#e3e3e3] font-['Noto_Sans',sans-serif] text-[10px] text-black">
      <MacMenuBar />
      <div className="flex h-5 items-center bg-[#f6f6f6] pl-[7px]">
        <div className="flex w-16 gap-2">
          <span className="h-[11px] w-[11px] rounded-full bg-[#d8d8d8]" />
          <span className="h-[11px] w-[11px] rounded-full bg-[#d8d8d8]" />
          <span className="h-[11px] w-[11px] rounded-full bg-[#d8d8d8]" />
        </div>
        <h1 className="flex-1 pt-[2px] pr-[71px] text-center font-[Inter,sans-serif] text-[12px] text-[#b0b0b0]">
          78257: BybitGlobal-Asia - Bybit Global LLC - [BTCUSDT,Daily]
        </h1>
      </div>
      <MenuBar />
      <Toolbar />
      <Terminal />

      <div className="flex h-[21px] items-start border-t-2 border-[#555] bg-[#e3e3e3]">
        <button className="h-[17px] w-[85px] text-center text-[#555]">BTCUSDT,H1</button>
        <button className="h-[18px] w-[90px] border-x border-b-2 border-[#333] bg-white text-center">BTCUSDT,Daily</button>
        <div className="mt-1 mr-2 ml-auto flex gap-3">
          <button aria-label="Назад">
            <svg className="h-2 w-[5px]" viewBox="0 0 5 8">
              <path d="M4 1v6L1 4z" fill="#888" />
            </svg>
          </button>
          <button aria-label="Вперед">
            <svg className="h-2 w-[5px]" viewBox="0 0 5 8">
              <path d="M1 1v6l3-3z" fill="#888" />
            </svg>
          </button>
        </div>
      </div>

      <footer className="flex h-[21px] items-center border-t border-white pt-px whitespace-nowrap">
        <span className="min-w-0 flex-1 pl-[2px]">Для вызова справки нажмите F1</span>
        {STATUS.map(([width, text]) => (
          <span key={text} className={clsx("h-[18px] shrink-0 border-l border-[#999] pl-1 leading-[18px]", width)}>
            {text}
          </span>
        ))}
        <span className="flex h-[18px] w-[130px] shrink-0 items-center gap-[2px] border-l border-[#999] pl-1">
          <svg className="h-[13px] w-6" viewBox="0 0 24 13">
            {[0, 1, 2, 3, 4, 5, 6, 7].map((i) => (
              <g key={i}>
                <rect x={i * 3} y={0} width={2} height={11 - i} fill="#4a8020" />
                <rect x={i * 3} y={12 - i} width={2} height={1 + i} fill="#b01010" />
              </g>
            ))}
          </svg>
          194144/37 kb
          <svg className="mt-1 ml-auto h-3 w-3" viewBox="0 0 12 12">
            <path d="M12 0L0 12M12 4L4 12M12 8L8 12" stroke="#888" />
          </svg>
        </span>
      </footer>
    </div>
  );
}
